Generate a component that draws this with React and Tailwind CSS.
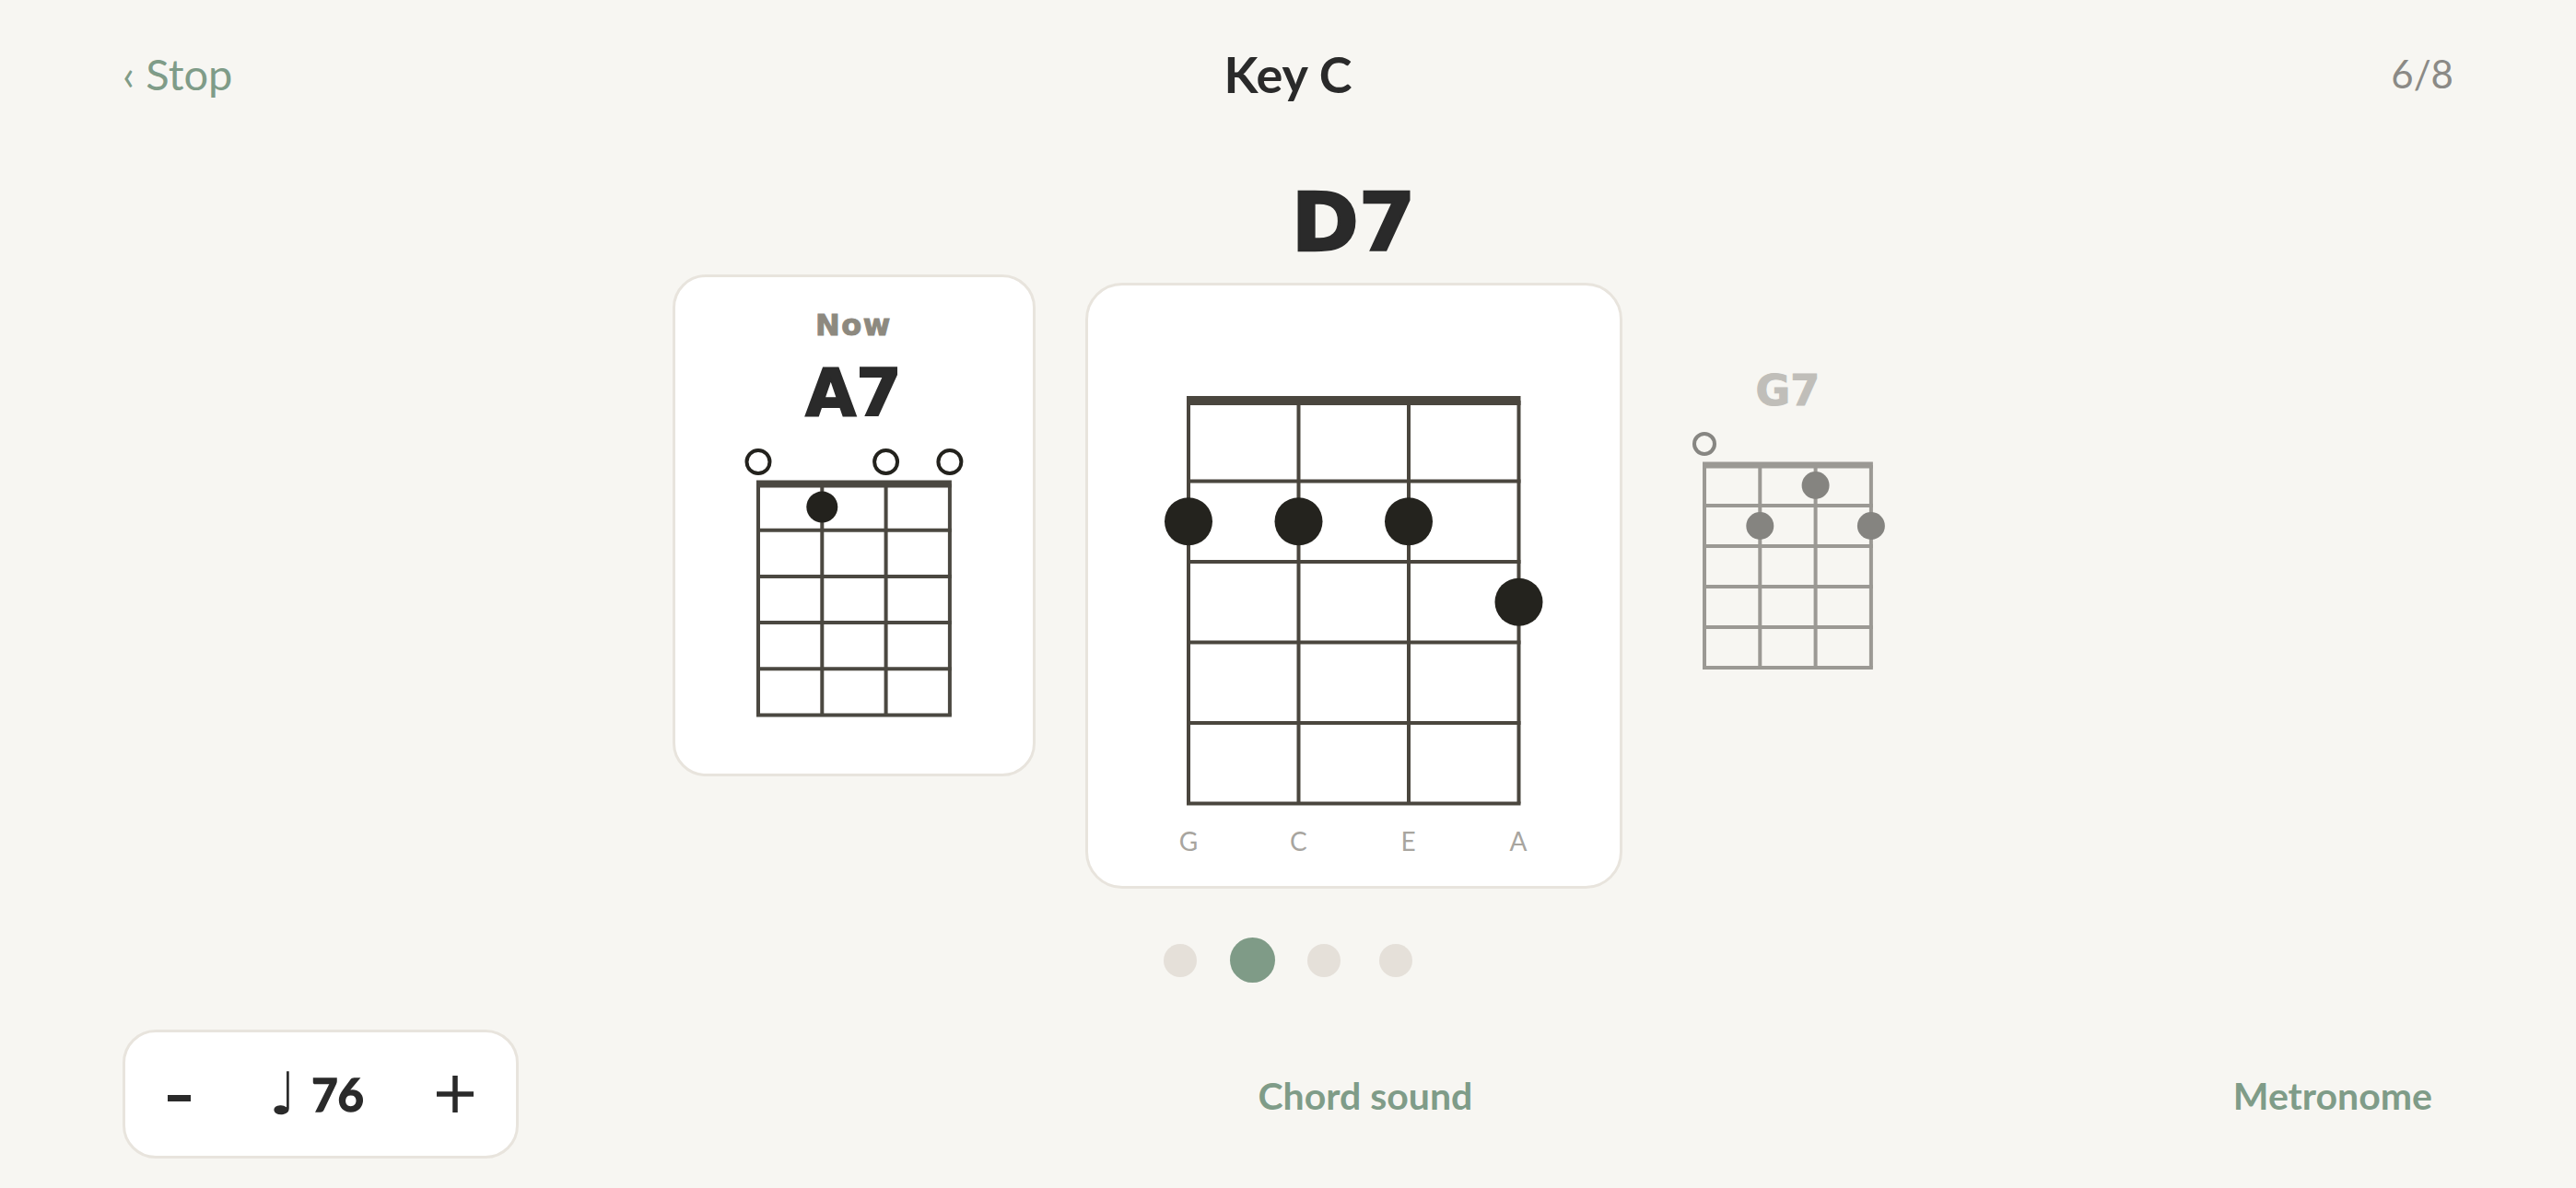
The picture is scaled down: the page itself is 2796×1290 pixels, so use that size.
import React from 'react';

const D7 = { dots: [[0, 2], [1, 2], [2, 2], [3, 3]], opens: [] };
const A7 = { dots: [[1, 1]], opens: [0, 2, 3] };
const G7 = { dots: [[2, 1], [1, 2], [3, 2]], opens: [0] };

// ukulele chord box, strings G C E A, five frets
const ChordDiagram = ({ chord, s, f, lw = 4, nw, dotR, openR = 0, openW = 4, openOff = 0, lineColor, dotColor, openColor }) => {
  const hasOpen = chord.opens.length > 0;
  const padX = Math.max(dotR, hasOpen ? openR + openW / 2 : 0) + 2;
  const padTop = hasOpen ? openOff + openR + openW / 2 + 2 : nw / 2 + 2;
  const gridW = s * 3;
  const gridH = f * 5;
  const width = gridW + padX * 2;
  const height = padTop + gridH + lw / 2 + 2;
  const x = (i) => padX + i * s;
  const y0 = padTop;

  return (
    <svg width={width} height={height} viewBox={`0 0 ${width} ${height}`}>
      {[0, 1, 2, 3].map((i) => (
        <line key={'s' + i} x1={x(i)} y1={y0} x2={x(i)} y2={y0 + gridH} stroke={lineColor} strokeWidth={lw} />
      ))}
      {[1, 2, 3, 4, 5].map((k) => (
        <line key={'f' + k} x1={x(0) - lw / 2} y1={y0 + k * f} x2={x(3) + lw / 2} y2={y0 + k * f} stroke={lineColor} strokeWidth={lw} />
      ))}
      <rect x={x(0) - lw / 2} y={y0 - nw / 2} width={gridW + lw} height={nw} fill={lineColor} />
      {chord.opens.map((i) => (
        <circle key={'o' + i} cx={x(i)} cy={y0 - openOff} r={openR} fill="none" stroke={openColor} strokeWidth={openW} />
      ))}
      {chord.dots.map(([i, fr]) => (
        <circle key={'d' + i} cx={x(i)} cy={y0 + (fr - 0.5) * f} r={dotR} fill={dotColor} />
      ))}
    </svg>
  );
};

const App = () => {
  const current = 1;

  return (
    <div className="min-h-screen w-full bg-[#f7f6f2] [font-family:Lato,sans-serif] text-[#2a2a2a]">
      <header className="h-[160px] px-[133px] grid grid-cols-3 items-center">
        <button className="justify-self-start text-[47px] text-[#7f9c88]">‹ Stop</button>
        <h1 className="justify-self-center text-[54px] font-bold text-[#2a2a2a]">Key C</h1>
        <div className="justify-self-end text-[42px] text-[#8b8a86]">6/8</div>
      </header>

      <main className="mt-[16px] flex justify-center items-center gap-[54px]">
        <div className="w-[394px] h-[545px] bg-white border-[3px] border-[#e8e4dd] rounded-[36px] flex flex-col items-center pt-[33px]">
          <div className="[font-family:'DejaVu_Sans',sans-serif] font-bold text-[32px] leading-[38px] tracking-[1.5px] text-[#8d897f] [-webkit-text-stroke:1px_#8d897f]">Now</div>
          <div className="mt-[12px] [font-family:'DejaVu_Sans',sans-serif] font-bold text-[71px] leading-[85px] text-[#2a2a2a] [-webkit-text-stroke:2px_#2a2a2a]">A7</div>
          <div className="mt-[16px]">
            <ChordDiagram
              chord={A7}
              s={69.3}
              f={50.2}
              nw={8}
              dotR={17}
              openR={12.5}
              openW={4}
              openOff={24}
              lineColor="#4b4841"
              dotColor="#23221d"
              openColor="#23221d"
            />
          </div>
        </div>

        <div className="w-[583px] flex flex-col items-center">
          <h2 className="[font-family:'DejaVu_Sans',sans-serif] font-bold text-[88px] leading-[131px] text-[#2a2a2a] [-webkit-text-stroke:2.5px_#2a2a2a]">D7</h2>
          <div className="w-[583px] h-[658px] bg-white border-[3px] border-[#e8e4dd] rounded-[40px] flex flex-col items-center pt-[118px]">
            <ChordDiagram
              chord={D7}
              s={119.5}
              f={87.5}
              nw={10}
              dotR={26}
              lineColor="#4a463e"
              dotColor="#24231e"
            />
            <div className="mt-[19px] w-[398px] flex justify-between text-[28px] leading-[34px] text-[#a8a59f]">
              {['G', 'C', 'E', 'A'].map((n) => (
                <span key={n} className="w-[40px] text-center">{n}</span>
              ))}
            </div>
          </div>
        </div>

        <div className="w-[252px] flex flex-col items-center pb-[15px]">
          <div className="[font-family:'DejaVu_Sans',sans-serif] font-bold text-[46px] leading-[55px] text-[#c0beb9] [-webkit-text-stroke:1px_#c0beb9]">G7</div>
          <div className="mt-[15px]">
            <ChordDiagram
              chord={G7}
              s={60.3}
              f={44}
              nw={7}
              dotR={15}
              openR={11}
              openW={4}
              openOff={23}
              lineColor="#9b9994"
              dotColor="#858480"
              openColor="#878682"
            />
          </div>
        </div>
      </main>

      <div className="mt-[53px] flex justify-center items-center h-[49px]">
        {[0, 1, 2, 3].map((i) => (
          <div key={i} className="w-[78px] flex justify-center">
            <span
              className={
                i === current
                  ? 'block w-[49px] h-[49px] rounded-full bg-[#7f9b87]'
                  : 'block w-[36px] h-[36px] rounded-full bg-[#e5e0d9]'
              }
            />
          </div>
        ))}
      </div>

      <footer className="mt-[51px] px-[133px] flex justify-between items-center">
        <div className="w-[430px] h-[140px] bg-white border-[3px] border-[#e8e4dd] rounded-[36px] flex items-center justify-between px-[46px]">
          <button className="mt-[8px] w-[25px] h-[7px] bg-[#2a2a2a]" aria-label="Slower" />
          <div className="ml-[6px] flex items-center gap-[16px]">
            <span className="[font-family:'DejaVu_Sans',sans-serif] text-[64px] leading-none">♩</span>
            <span className="text-[49px] font-bold leading-none [-webkit-text-stroke:1.5px_#2a2a2a]">76</span>
          </div>
          <button aria-label="Faster">
            <svg width="40" height="40" viewBox="0 0 40 40">
              <rect x="17.25" y="0" width="5.5" height="40" fill="#2a2a2a" />
              <rect x="0" y="17.25" width="40" height="5.5" fill="#2a2a2a" />
            </svg>
          </button>
        </div>
        <button className="mt-[4px] px-[23px] text-[41px] font-bold text-[#7f9c88]">Chord sound</button>
        <button className="mt-[4px] px-[23px] text-[41px] font-bold text-[#7f9c88]">Metronome</button>
      </footer>
    </div>
  );
};

export default App;
